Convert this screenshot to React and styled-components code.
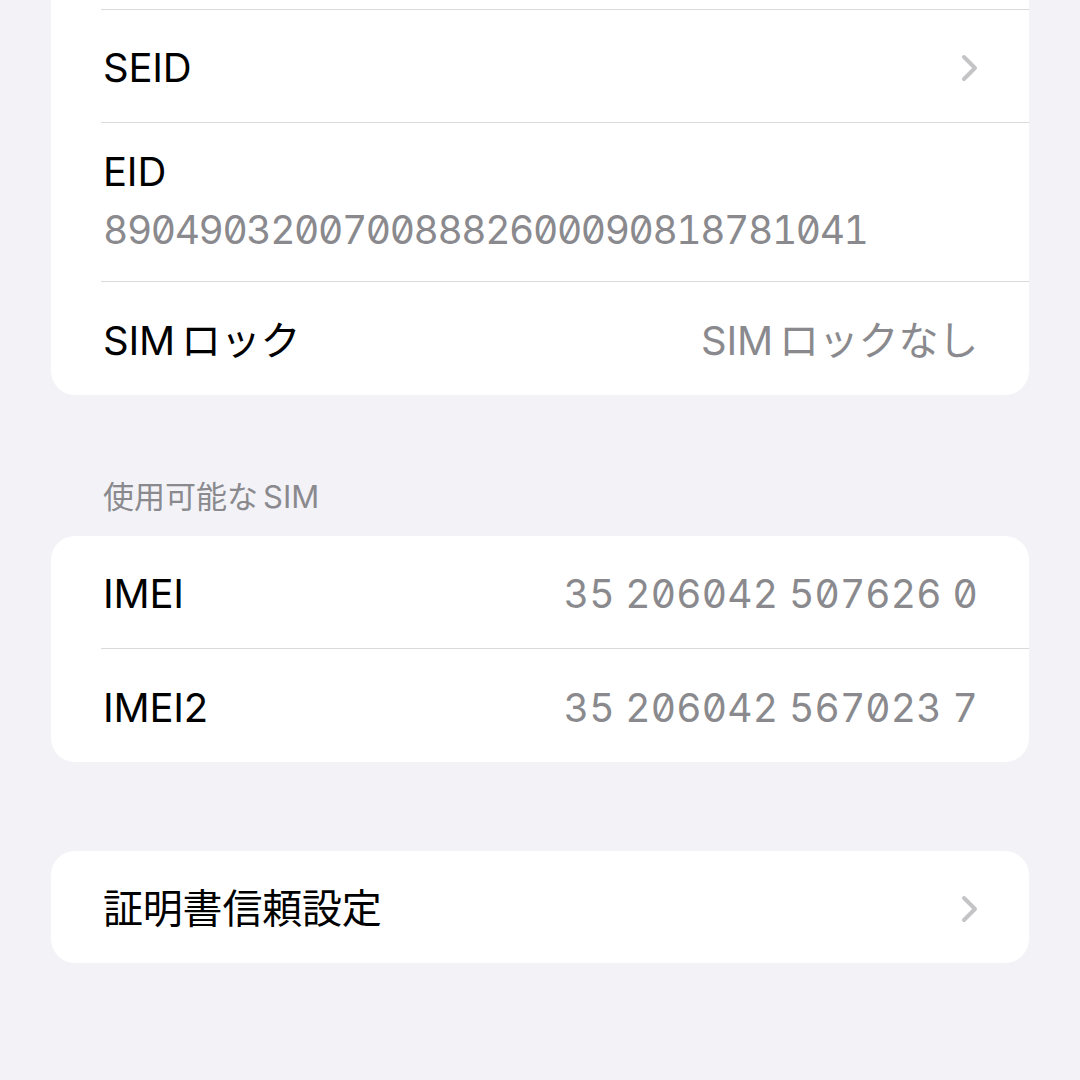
import styled, { createGlobalStyle } from 'styled-components'

const GlobalStyle = createGlobalStyle`
  html, body {
    margin: 0;
    padding: 0;
    background: #f2f2f7;
  }
  body {
    font-family: Inter, "Noto Sans CJK JP", sans-serif;
    -webkit-font-smoothing: antialiased;
  }
`;

const Page = styled.div`
  width: 1080px;
  height: 1080px;
  overflow: hidden;
  background: #f2f2f7;
  padding: 0 51px;
  box-sizing: border-box;
  display: flex;
  flex-direction: column;
`;

const Card = styled.div`
  background: #ffffff;
  border-radius: ${p => (p.$cut ? '0 0 24px 24px' : '24px')};
  margin-top: ${p => p.$top || 0}px;
  display: flex;
  flex-direction: column;
  overflow: hidden;
`;

const Cut = styled.div`
  height: 9px;
`;

const Divider = styled.div`
  height: 1px;
  margin-left: 50px;
  background: #d9d9de;
`;

const Row = styled.div`
  height: ${p => p.$h || 112}px;
  padding: 4px 51px 0 52px;
  display: flex;
  align-items: center;
  justify-content: space-between;
  box-sizing: border-box;
`;

const StackRow = styled.div`
  height: 158px;
  padding: 25px 52px 0;
  box-sizing: border-box;
  display: flex;
  flex-direction: column;
  gap: 10px;
`;

const Label = styled.span`
  font-size: 40px;
  line-height: 48px;
  color: #000;
  letter-spacing: -0.2px;
`;

const Value = styled.span`
  font-size: 40px;
  line-height: 48px;
  color: #8a8a8e;
  letter-spacing: -0.2px;
`;

// iOS puts a little air between latin and kana
const Latin = styled.span`
  margin-left: ${p => p.$before || 0}px;
  margin-right: ${p => p.$after || 0}px;
`;

const Mono = styled.span`
  font-size: 39px;
  line-height: 48px;
  color: #8a8a8e;
  font-feature-settings: "tnum" 1, "zero" 1;
  letter-spacing: ${p => p.$spacing || 0}px;
`;

const SectionTitle = styled.div`
  margin-top: 82px;
  padding-left: 52px;
  height: 40px;
  line-height: 40px;
  font-size: 31px;
  color: #8a8a8e;
  margin-bottom: 19px;
`;

const Chevron = () => (
  <svg width="17" height="28" viewBox="0 0 17 28">
    <polyline
      points="3,3 14,14 3,25"
      fill="none"
      stroke="#c4c4c7"
      strokeWidth="4"
      strokeLinecap="round"
      strokeLinejoin="round"
    />
  </svg>
);

function App() {
  return (
    <>
      <GlobalStyle />
      <Page>
        <Card $cut>
          <Cut />
          <Divider />
          <Row>
            <Label>SEID</Label>
            <Chevron />
          </Row>
          <Divider />
          <StackRow>
            <Label>EID</Label>
            <Mono $spacing={-1.4}>89049032007008882600090818781041</Mono>
          </StackRow>
          <Divider />
          <Row $h={113}>
            <Label>
              <Latin $after={6}>SIM</Latin>ロック
            </Label>
            <Value>
              <Latin $after={6}>SIM</Latin>ロックなし
            </Value>
          </Row>
        </Card>

        <SectionTitle>
          使用可能な<Latin $before={5}>SIM</Latin>
        </SectionTitle>

        <Card>
          <Row>
            <Label>IMEI</Label>
            <Mono $spacing={0.2}>35 206042 507626 0</Mono>
          </Row>
          <Divider />
          <Row $h={113}>
            <Label>IMEI2</Label>
            <Mono $spacing={0.2}>35 206042 567023 7</Mono>
          </Row>
        </Card>

        <Card $top={89}>
          <Row>
            <Label>証明書信頼設定</Label>
            <Chevron />
          </Row>
        </Card>
      </Page>
    </>
  );
}

export default App;
